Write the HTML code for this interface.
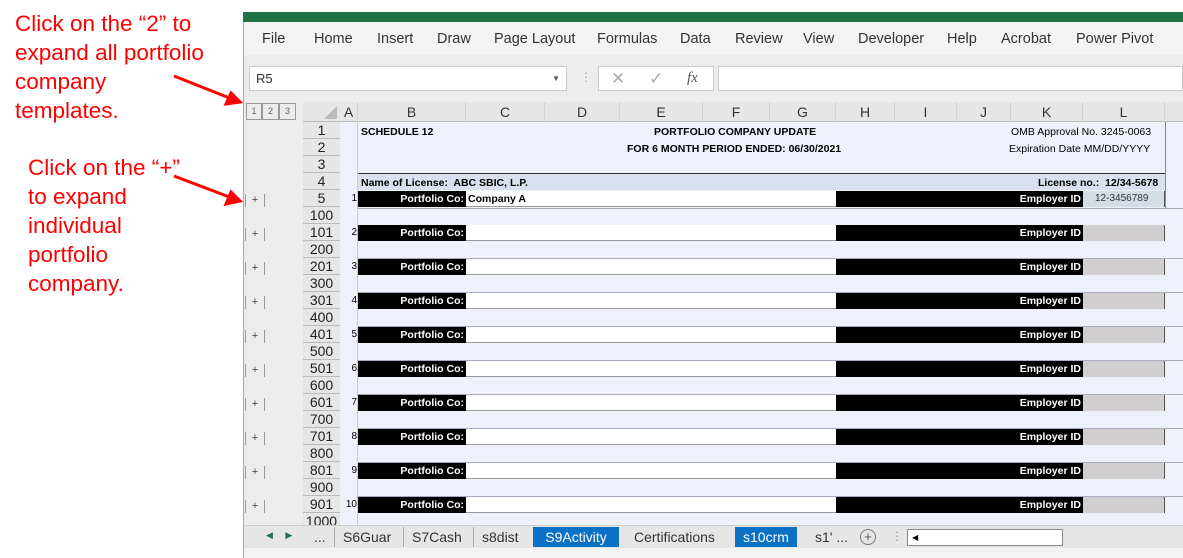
<!DOCTYPE html><html><head><style>
*{margin:0;padding:0;box-sizing:border-box}
body{width:1183px;height:558px;position:relative;overflow:hidden;background:#fff;font-family:"Liberation Sans",sans-serif}
.a{position:absolute}
.red{color:#f00;font-size:22.5px;line-height:29px;font-family:"Liberation Sans",sans-serif}
.tab{position:absolute;top:31px;font-size:14.5px;color:#333}
.ch{position:absolute;top:102px;height:20px;font-size:14px;color:#333;text-align:center;line-height:20px;border-right:1px solid #d4d4d4}
.rh{position:absolute;left:303px;width:37px;height:17px;font-size:14px;color:#222;text-align:center;line-height:17px;background:#e6e6e6;border-bottom:1px solid #bbb}
.b{font-weight:bold;font-size:10.5px;color:#000}
.pc{position:absolute;left:358px;width:108px;height:16px;background:#000;color:#fff;font-weight:bold;font-size:10.5px;text-align:right;padding-right:2px;line-height:16px}
.wh{position:absolute;left:466px;width:370px;height:16px;background:#fff;border-bottom:1px solid #999}
.em{position:absolute;left:836px;width:247px;height:16px;background:#000;color:#fff;font-weight:bold;font-size:10.5px;text-align:right;padding-right:2px;line-height:16px}
.gl{position:absolute;left:1083px;width:82px;height:16px;background:#d0cece;border-right:1px solid #555;font-size:10px;line-height:16px;padding-left:12px;color:#333}
.n{position:absolute;left:343px;width:14px;font-size:10px;line-height:16px;text-align:right;color:#000}
.pl{position:absolute;left:245px;width:20px;font-size:11px;color:#444;border-left:1px solid #999;border-right:1px solid #999;height:13px;line-height:13px;text-align:center}
.sep{position:absolute;left:358px;width:825px;height:1px;background:#aab}
.st{position:absolute;top:527px;height:20px;font-size:14px;line-height:20px;color:#333;padding:0 8px;font-family:"Liberation Sans Narrow","Liberation Sans",sans-serif}
</style></head><body>
<div class="a red" style="left:15px;top:9px">Click on the “2” to<br>expand all portfolio<br>company<br>templates.</div>
<div class="a red" style="left:28px;top:153px">Click on the “+”<br>to expand<br>individual<br>portfolio<br>company.</div>
<svg class="a" style="left:0;top:0" width="250" height="220"><g stroke="#f00" stroke-width="3" fill="#f00"><line x1="174" y1="76" x2="232" y2="99"/><polygon points="240,102 226,104 231,93"/><line x1="174" y1="176" x2="232" y2="198"/><polygon points="240,201 226,204 231,192"/></g></svg>
<div class="a" style="left:243px;top:12px;width:940px;height:10px;background:#217346"></div>
<div class="a" style="left:243px;top:22px;width:940px;height:536px;background:#ececec;border-left:1px solid #aaa"></div>
<div class="a" style="left:244px;top:22px;width:939px;height:33px;background:#f3f3f3"></div>
<div class="tab" style="left:262px">File</div><div class="tab" style="left:314px">Home</div><div class="tab" style="left:377px">Insert</div><div class="tab" style="left:437px">Draw</div><div class="tab" style="left:494px">Page Layout</div><div class="tab" style="left:597px">Formulas</div><div class="tab" style="left:680px">Data</div><div class="tab" style="left:735px">Review</div><div class="tab" style="left:803px">View</div><div class="tab" style="left:858px">Developer</div><div class="tab" style="left:947px">Help</div><div class="tab" style="left:1001px">Acrobat</div><div class="tab" style="left:1076px">Power Pivot</div>
<div class="a" style="left:249px;top:66px;width:318px;height:25px;background:#fff;border:1px solid #ccc;font-size:13px;line-height:23px;padding-left:6px;color:#333">R5<span style="position:absolute;right:6px;font-size:8px;color:#555">▼</span></div>
<div class="a" style="left:580px;top:70px;color:#aaa;font-size:12px">⋮</div>
<div class="a" style="left:598px;top:66px;width:116px;height:25px;background:#fff;border:1px solid #ccc;font-size:17px;line-height:23px;color:#aaa"><span style="position:absolute;left:12px">✕</span><span style="position:absolute;left:50px">✓</span><i style="position:absolute;left:88px;color:#555;font-family:'Liberation Serif',serif;font-size:15px">fx</i></div>
<div class="a" style="left:718px;top:66px;width:465px;height:25px;background:#fff;border:1px solid #ccc"></div>
<div class="a" style="left:246px;top:103px;width:52px;height:17px;font-size:9px;color:#666;line-height:15px"><span style="display:inline-block;width:16px;border:1px solid #999;text-align:center">1</span><span style="display:inline-block;width:17px;border:1px solid #999;text-align:center">2</span><span style="display:inline-block;width:17px;border:1px solid #999;text-align:center">3</span></div>
<div class="a" style="left:303px;top:102px;width:880px;height:20px;background:#e6e6e6;border-bottom:1px solid #bbb"></div>
<svg class="a" style="left:322px;top:105px" width="16" height="15"><polygon points="15,1 15,14 2,14" fill="#bbb"/></svg>
<div class="ch" style="left:340px;width:18px">A</div><div class="ch" style="left:358px;width:108px">B</div><div class="ch" style="left:466px;width:79px">C</div><div class="ch" style="left:545px;width:75px">D</div><div class="ch" style="left:620px;width:83px">E</div><div class="ch" style="left:703px;width:67px">F</div><div class="ch" style="left:770px;width:66px">G</div><div class="ch" style="left:836px;width:59px">H</div><div class="ch" style="left:895px;width:62px">I</div><div class="ch" style="left:957px;width:54px">J</div><div class="ch" style="left:1011px;width:72px">K</div><div class="ch" style="left:1083px;width:82px">L</div>
<div class="a" style="left:340px;top:122px;width:843px;height:403px;background:#eef1f9"></div>
<div class="a" style="left:340px;top:122px;width:18px;height:403px;background:#eef1f9;border-right:1px solid #ccc"></div>
<div class="a" style="left:1165px;top:122px;width:1px;height:86px;background:#888"></div>
<div class="a b" style="left:361px;top:126px">SCHEDULE 12</div>
<div class="a b" style="left:654px;top:126px">PORTFOLIO COMPANY UPDATE</div>
<div class="a b" style="left:627px;top:143px">FOR 6 MONTH PERIOD ENDED: 06/30/2021</div>
<div class="a" style="left:1011px;top:126px;font-size:10.5px">OMB Approval No. 3245-0063</div>
<div class="a" style="left:1009px;top:143px;font-size:10.5px">Expiration Date MM/DD/YYYY</div>
<div class="a" style="left:358px;top:173px;width:807px;height:17px;background:#dae0f0;border-top:1px solid #333"></div>
<div class="a b" style="left:361px;top:177px">Name of License:&nbsp; ABC SBIC, L.P.</div>
<div class="a b" style="left:1038px;top:177px">License no.:&nbsp; 12/34-5678</div>
<div class="rh" style="top:122px">1</div><div class="rh" style="top:139px">2</div><div class="rh" style="top:156px">3</div><div class="rh" style="top:173px">4</div>
<div class="rh" style="top:190px">5</div><div class="rh" style="top:207px">100</div>
<div class="rh" style="top:224px">101</div><div class="rh" style="top:241px">200</div>
<div class="rh" style="top:258px">201</div><div class="rh" style="top:275px">300</div>
<div class="rh" style="top:292px">301</div><div class="rh" style="top:309px">400</div>
<div class="rh" style="top:326px">401</div><div class="rh" style="top:343px">500</div>
<div class="rh" style="top:360px">501</div><div class="rh" style="top:377px">600</div>
<div class="rh" style="top:394px">601</div><div class="rh" style="top:411px">700</div>
<div class="rh" style="top:428px">701</div><div class="rh" style="top:445px">800</div>
<div class="rh" style="top:462px">801</div><div class="rh" style="top:479px">900</div>
<div class="rh" style="top:496px">901</div><div class="rh" style="top:513px">1000</div>
<div class="pc" style="top:191px">Portfolio Co:</div><div class="wh" style="top:191px;font-size:10.5px;font-weight:bold;padding-left:2px;line-height:16px">Company A</div><div class="em" style="top:191px">Employer ID</div><div class="gl" style="top:191px;background:#d6dce4">12-3456789</div><div class="n" style="top:191px">1</div><div class="sep" style="top:208px"></div><div class="pl" style="top:194px">+</div>
<div class="pc" style="top:225px">Portfolio Co:</div><div class="wh" style="top:225px"></div><div class="em" style="top:225px">Employer ID</div><div class="gl" style="top:225px"></div><div class="n" style="top:225px">2</div><div class="sep" style="top:258px"></div><div class="pl" style="top:228px">+</div>
<div class="pc" style="top:259px">Portfolio Co:</div><div class="wh" style="top:259px"></div><div class="em" style="top:259px">Employer ID</div><div class="gl" style="top:259px"></div><div class="n" style="top:259px">3</div><div class="sep" style="top:292px"></div><div class="pl" style="top:262px">+</div>
<div class="pc" style="top:293px">Portfolio Co:</div><div class="wh" style="top:293px"></div><div class="em" style="top:293px">Employer ID</div><div class="gl" style="top:293px"></div><div class="n" style="top:293px">4</div><div class="sep" style="top:326px"></div><div class="pl" style="top:296px">+</div>
<div class="pc" style="top:327px">Portfolio Co:</div><div class="wh" style="top:327px"></div><div class="em" style="top:327px">Employer ID</div><div class="gl" style="top:327px"></div><div class="n" style="top:327px">5</div><div class="sep" style="top:360px"></div><div class="pl" style="top:330px">+</div>
<div class="pc" style="top:361px">Portfolio Co:</div><div class="wh" style="top:361px"></div><div class="em" style="top:361px">Employer ID</div><div class="gl" style="top:361px"></div><div class="n" style="top:361px">6</div><div class="sep" style="top:394px"></div><div class="pl" style="top:364px">+</div>
<div class="pc" style="top:395px">Portfolio Co:</div><div class="wh" style="top:395px"></div><div class="em" style="top:395px">Employer ID</div><div class="gl" style="top:395px"></div><div class="n" style="top:395px">7</div><div class="sep" style="top:428px"></div><div class="pl" style="top:398px">+</div>
<div class="pc" style="top:429px">Portfolio Co:</div><div class="wh" style="top:429px"></div><div class="em" style="top:429px">Employer ID</div><div class="gl" style="top:429px"></div><div class="n" style="top:429px">8</div><div class="sep" style="top:462px"></div><div class="pl" style="top:432px">+</div>
<div class="pc" style="top:463px">Portfolio Co:</div><div class="wh" style="top:463px"></div><div class="em" style="top:463px">Employer ID</div><div class="gl" style="top:463px"></div><div class="n" style="top:463px">9</div><div class="sep" style="top:496px"></div><div class="pl" style="top:466px">+</div>
<div class="pc" style="top:497px">Portfolio Co:</div><div class="wh" style="top:497px"></div><div class="em" style="top:497px">Employer ID</div><div class="gl" style="top:497px"></div><div class="n" style="top:497px">10</div><div class="pl" style="top:500px">+</div>
<div class="a" style="left:244px;top:525px;width:939px;height:23px;background:#e6e6e6;border-top:1px solid #ccc"></div>
<div class="a" style="left:266px;top:530px;font-size:9px;color:#217346">◀&nbsp;&nbsp;&nbsp;&nbsp;&nbsp;▶</div>
<div class="st" style="left:306px">...</div>
<div class="st" style="left:334px;border-left:1px solid #aaa">S6Guar</div>
<div class="st" style="left:403px;border-left:1px solid #aaa">S7Cash</div>
<div class="st" style="left:473px;border-left:1px solid #aaa">s8dist</div>
<div class="st" style="left:533px;width:86px;background:#0b71c4;color:#fff;text-align:center">S9Activity</div>
<div class="st" style="left:626px">Certifications</div>
<div class="st" style="left:735px;background:#0b71c4;color:#fff">s10crm</div>
<div class="st" style="left:807px">s1' ...</div>
<div class="a" style="left:860px;top:529px;width:16px;height:16px;border:1px solid #777;border-radius:50%;font-size:13px;line-height:13px;text-align:center;color:#555">+</div>
<div class="a" style="left:891px;top:529px;color:#999;font-size:12px">⋮</div>
<div class="a" style="left:907px;top:529px;width:156px;height:17px;background:#fff;border:1px solid #888;font-size:8px;line-height:15px;padding-left:4px">◀</div>
<div class="a" style="left:244px;top:548px;width:939px;height:10px;background:#f3f3f3"></div>
</body></html>
